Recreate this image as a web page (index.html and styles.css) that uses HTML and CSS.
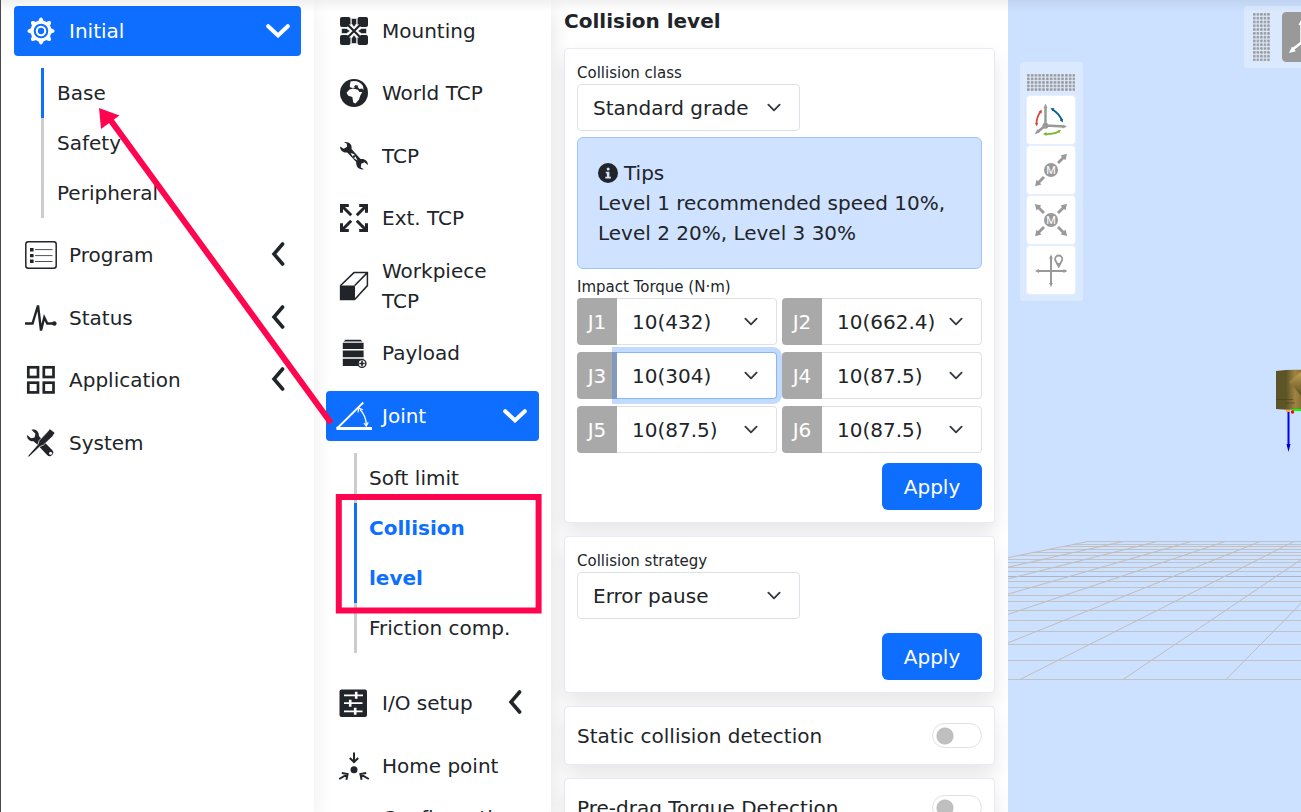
FILE: index.html
```html
<!DOCTYPE html>
<html lang="en">
<head>
<meta charset="utf-8">
<title>Collision level</title>
<link rel="stylesheet" href="styles.css">
</head>
<body>
<svg class="defs" aria-hidden="true">
  <symbol id="chev-down" viewBox="0 0 24 14"><path d="M2.2 2.2 12 11.4 21.8 2.2" fill="none" stroke="currentColor" stroke-width="4" stroke-linecap="round"/></symbol>
  <symbol id="chev-left" viewBox="0 0 14 24"><path d="M11.6 2 3 12l8.600 10" fill="none" stroke="currentColor" stroke-width="3.6" stroke-linecap="round"/></symbol>
</svg>
<div class="app">
  <nav class="main-nav" aria-label="Main">
    <ul class="nav-list">
      <li>
        <button class="nav-item active" type="button">
          <svg class="icon" viewBox="0 0 32 32"><circle cx="16" cy="16" r="8.900" fill="none" stroke="currentColor" stroke-width="3.200"/><circle cx="16" cy="16" r="4.200" fill="none" stroke="currentColor" stroke-width="2.100"/><g fill="currentColor"><path id="tooth" d="M12.500 7.500 14.500 3.400a1.700 1.700 0 0 1 3 0l2 4.100z"/><use href="#tooth" transform="rotate(45 16 16)"/><use href="#tooth" transform="rotate(90 16 16)"/><use href="#tooth" transform="rotate(135 16 16)"/><use href="#tooth" transform="rotate(180 16 16)"/><use href="#tooth" transform="rotate(225 16 16)"/><use href="#tooth" transform="rotate(270 16 16)"/><use href="#tooth" transform="rotate(315 16 16)"/></g></svg>
          <span>Initial</span><svg class="chev down"><use href="#chev-down"/></svg>
        </button>
        <ul class="sub-nav">
          <li><a class="current" href="#base">Base</a></li>
          <li><a href="#safety">Safety</a></li>
          <li><a href="#peripheral">Peripheral</a></li>
        </ul>
      </li>
      <li><button class="nav-item" type="button">
        <svg class="icon" viewBox="0 0 32 32"><rect x=".8" y="2.800" width="30.400" height="26.400" rx="2.500" fill="none" stroke="currentColor" stroke-width="1.500"/><path d="M5 9h3.600v3.500H5zM5 15h3.600v3.200H5zM5 20.500h3.600V24H5z" fill="currentColor"/><path d="M10 10.600h17.500M10 16.600h17.500M10 22.500h17.500" stroke="currentColor" stroke-width=".8"/></svg>
        <span>Program</span><svg class="chev left"><use href="#chev-left"/></svg></button></li>
      <li><button class="nav-item" type="button">
        <svg class="icon" viewBox="0 0 32 32"><path d="M0 21.500h7.500L13 3.500 16 28.500 19.300 15.500 22.300 21.500H29" fill="none" stroke="currentColor" stroke-width="2.400"/><circle cx="29.300" cy="21.500" r="2.300" fill="currentColor"/></svg>
        <span>Status</span><svg class="chev left"><use href="#chev-left"/></svg></button></li>
      <li><button class="nav-item" type="button">
        <svg class="icon" viewBox="0 0 32 32"><g fill="none" stroke="currentColor" stroke-width="2.700"><rect x="3.300" y="3.300" width="9.700" height="9.700"/><rect x="18.800" y="3.300" width="9.700" height="9.700"/><rect x="3.300" y="18.700" width="9.700" height="9.700"/><rect x="18.800" y="18.700" width="9.700" height="9.700"/></g></svg>
        <span>Application</span><svg class="chev left"><use href="#chev-left"/></svg></button></li>
      <li><button class="nav-item" type="button">
        <svg class="icon" viewBox="0 0 32 32" fill="currentColor"><path d="M6.500 2.800c4-1.200 7.600 1.600 7.400 6.200l4.200 4.700 9 9.300a3.400 3.400 0 1 1-5 5L12.700 18l-4.200-3.800C5 14.800 1.800 12.200 2 8l4 3.200 3.600-.8.8-3.600z"/><path d="M24.800 1.800 30 5.800 27.500 9.500 18.500 18 15 19.500 4 30 2.600 29.200 13 17.200l1.200-3.700 8.300-8.700z" stroke="#fff" stroke-width=".7"/><circle cx="25.600" cy="26.200" r="1.500" fill="#fff"/></svg>
        <span>System</span></button></li>
    </ul>
  </nav>

  <nav class="page-nav" aria-label="Initial base">
    <ul class="nav-list">
      <li><button class="nav-item" type="button">
        <svg class="icon" viewBox="0 0 36 36"><g fill="currentColor"><rect x="4" y="4" width="10.500" height="10" rx="2"/><rect x="21.500" y="4" width="10.500" height="10" rx="2"/><rect x="4" y="22" width="10.500" height="10" rx="2"/><rect x="21.500" y="22" width="10.500" height="10" rx="2"/></g><path d="m12.500 12.500 11 11M23.500 12.500l-11 11" stroke="#fff" stroke-width="4"/><path d="m11 11 14 14M25 11 11 25" stroke="currentColor" stroke-width="2.200"/><g fill="currentColor" stroke="#fff" stroke-width=".6"><path id="mt" d="M15.400 5.500h5.200v5L18 14.200l-2.600-3.700z"/><use href="#mt" transform="rotate(90 18 18)"/><use href="#mt" transform="rotate(180 18 18)"/><use href="#mt" transform="rotate(270 18 18)"/></g></svg>
        <span>Mounting</span></button></li>
      <li><button class="nav-item" type="button">
        <svg class="icon" viewBox="0 0 36 36"><circle cx="18" cy="18" r="14" fill="currentColor"/><path fill="#fff" d="M14.500 6.500c5-1.500 10 .3 12.500 4.500l.5 4-1.500-1.500-2.500.5-1.800-2 .5-1.200-2.700-.8-1.500 1.500 1.300.8-2.300.7-2.500-.6-.8-1.200zM13.500 14.500l3.500-1 5 1.200 1.300 2.300h3l-2 3.500-1.300 4-3.500 4-2.200-1-1-5.500-4-1.200-1.800-3z"/></svg>
        <span>World TCP</span></button></li>
      <li><button class="nav-item" type="button">
        <svg class="icon" viewBox="0 0 36 36"><path fill="currentColor" d="M8 4c5-.8 8.500 2.500 7.500 7l9 10c4.200-.7 7.500 2 7.500 6l-3.600-2.800-3.200 1.500-.4 3.800 3.200 1.800c-4.800.8-8.200-2-7.800-7.200L11.200 14.500C7.500 15 4 12.500 4 8.500l3.800 2.300 3.200-2-.2-3z"/><path d="m14.500 15 3.500 1 3.600 6.400-3.800-2.100z" fill="#fff"/><circle cx="18" cy="18.500" r="1.200" fill="currentColor"/></svg>
        <span>TCP</span></button></li>
      <li><button class="nav-item" type="button">
        <svg class="icon" viewBox="0 0 36 36"><g fill="none" stroke="currentColor" stroke-width="3"><path id="ex" d="M5.500 12.800V5.500h7.300M6 6l9.200 9.200"/><use href="#ex" transform="rotate(90 18 18)"/><use href="#ex" transform="rotate(180 18 18)"/><use href="#ex" transform="rotate(270 18 18)"/></g></svg>
        <span>Ext. TCP</span></button></li>
      <li><button class="nav-item" type="button">
        <svg class="icon" viewBox="0 0 36 36"><path d="M4.600 17.500 18 4.600h13.400v13L18.700 31.400H4.600zM18.700 17.500 31.400 4.600" fill="none" stroke="currentColor" stroke-width="1.500"/><path d="M4 17.500h15v14H4z" fill="currentColor"/></svg>
        <span>Workpiece TCP</span></button></li>
      <li><button class="nav-item" type="button">
        <svg class="icon" viewBox="0 0 36 36"><path fill="currentColor" d="M9.500 4.700h15l2 1.800h-19zM6.800 7.700h20.800v6.400H6.800zM6.800 15.600h20.800v6.600H6.800zM6.800 23.800h20.800V31H6.800z"/><circle cx="26" cy="28.500" r="3.900" fill="#fff" stroke="currentColor" stroke-width="1.400"/><path d="M26 25.800v5.400M23.300 28.500h5.400" stroke="currentColor" stroke-width="1.600"/></svg>
        <span>Payload</span></button></li>
      <li>
        <button class="nav-item active" type="button">
          <svg class="icon" viewBox="0 0 36 36" fill="none" stroke="currentColor"><path d="M.5 30.500h35.500" stroke-width="3"/><path d="M2 29.500 27.300 4.500" stroke-width="1.800"/><path d="M24 11.500c4 4 6.200 9.500 6.400 16" stroke-width="1.300"/><path d="m22 14.500.8-4.500 4 1.700M28 25l2.200 3.200 2-3.800" stroke-width="1.200"/><circle cx="2.400" cy="30" r="1.500" stroke-width="1"/></svg>
          <span>Joint</span><svg class="chev down"><use href="#chev-down"/></svg>
        </button>
        <ul class="sub-nav">
          <li><a href="#soft-limit">Soft limit</a></li>
          <li><a class="current selected" href="#collision-level">Collision level</a></li>
          <li><a href="#friction">Friction comp.</a></li>
        </ul>
      </li>
      <li><button class="nav-item" type="button">
        <svg class="icon" viewBox="0 0 36 36"><rect x="3.500" y="4.500" width="27.500" height="27.500" rx="2" fill="currentColor"/><path d="M8 10.300h19M8 18.200h18.500M8 26.300h18.500" stroke="#fff" stroke-width="1.800"/><path d="M20.200 6.800v7M14.200 14.700v7M19.200 22.800v7" stroke="#fff" stroke-width="2.600"/></svg>
        <span>I/O setup</span><svg class="chev left"><use href="#chev-left"/></svg></button></li>
      <li><button class="nav-item" type="button">
        <svg class="icon" viewBox="0 0 36 36"><circle cx="18" cy="21.700" r="3.500" fill="currentColor"/><g fill="none" stroke="currentColor" stroke-width="2"><path d="M18 4.500v9M13.800 10l4.200 4 4.200-4"/><path d="m3.200 31 8-4.700M5.800 25l5.800 1-1.200 5.800M32.800 31l-8-4.700M30.200 25l-5.800 1 1.200 5.800"/></g></svg>
        <span>Home point</span></button></li>
      <li><button class="nav-item top" type="button">
        <span class="icon"></span>
        <span>Configuration</span></button></li>
    </ul>
  </nav>

  <main class="settings">
    <h1 class="title">Collision level</h1>
    <section class="card">
      <label class="caption" for="grade">Collision class</label>
      <select class="select medium" id="grade"><option>Standard grade</option></select>
      <div class="tips">
        <p class="tips-head"><svg class="info" viewBox="0 0 20 20"><circle cx="10" cy="10" r="10" fill="currentColor"/><circle cx="10.200" cy="6" r="1.500" fill="#cfe2ff"/><path d="M7.800 8.800h3.600v5h1.500v1.600H7.300v-1.600h1.600v-3.400H7.800z" fill="#cfe2ff"/></svg>Tips</p>
        <p>Level 1 recommended speed 10%, Level 2 20%, Level 3 30%</p>
      </div>
      <p class="caption" id="torque">Impact Torque (N·m)</p>
      <div class="joints" role="group" aria-labelledby="torque">
        <div class="joint"><label for="j1">J1</label><select class="select" id="j1"><option>10(432)</option></select></div>
        <div class="joint"><label for="j2">J2</label><select class="select" id="j2"><option>10(662.4)</option></select></div>
        <div class="joint"><label for="j3">J3</label><select class="select focused" id="j3"><option>10(304)</option></select></div>
        <div class="joint"><label for="j4">J4</label><select class="select" id="j4"><option>10(87.5)</option></select></div>
        <div class="joint"><label for="j5">J5</label><select class="select" id="j5"><option>10(87.5)</option></select></div>
        <div class="joint"><label for="j6">J6</label><select class="select" id="j6"><option>10(87.5)</option></select></div>
      </div>
      <div class="actions"><button class="apply" type="button">Apply</button></div>
    </section>
    <section class="card">
      <label class="caption" for="strategy">Collision strategy</label>
      <select class="select medium" id="strategy"><option>Error pause</option></select>
      <div class="actions spaced"><button class="apply" type="button">Apply</button></div>
    </section>
    <section class="card switch-row">
      <label for="static">Static collision detection</label><input class="switch" type="checkbox" role="switch" id="static">
    </section>
    <section class="card switch-row">
      <label for="predrag">Pre-drag Torque Detection</label><input class="switch" type="checkbox" role="switch" id="predrag">
    </section>
  </main>

  <section class="scene" aria-label="Robot view">
    <svg class="world" aria-hidden="true">
      <defs>
        <linearGradient id="metal"><stop offset="0" stop-color="#5c5426"/><stop offset=".32" stop-color="#5e5527"/><stop offset=".6" stop-color="#a08442"/><stop offset="1" stop-color="#6b5a28"/></linearGradient>
        <linearGradient id="elbow" x2="0" y2="1"><stop offset="0" stop-color="#c9a455"/><stop offset="1" stop-color="#4c431c"/></linearGradient>
      </defs>
      <g stroke="#c2c1c4" stroke-width="1" fill="none" shape-rendering="crispEdges">
        <path d="M80 541.500H900M65 544.500H900M55 546.500H900M40 549.500H900M25 552.500H900M10 555.500H900M0 559.500H900M0 562.500H900M0 567.500H900M0 571.500H900M0 581.500H900M0 587.500H900M0 595.500H900M0 601.500H900M0 610.500H900M0 620.500H900M0 631.500H900M0 644.500H900M0 660.500H900M0 679.500H900"/>
        <path d="M0 576.500H900" stroke="#a9b4c6"/>
      </g>
      <path d="M80 541.500-606 679.500M115 541.500-503 679.500M149 541.500-400 679.500M183 541.500-297 679.500M217 541.500-194 679.500M252 541.500-91 679.500M286 541.500 12 679.500M320 541.500 115 679.500M354 541.500 218 679.500M388 541.500 321 679.500M423 541.500 424 679.500M457 541.500 527 679.500M491 541.500 630 679.500M525 541.500 733 679.500" stroke="#c2bdbb" stroke-width="1" fill="none"/>
      <path d="M268 371q14-2 32-1v38q-14 3-32 1z" fill="url(#metal)"/>
      <path d="M281 382 294 371h10v28h-8z" fill="url(#elbow)"/>
      <path d="M268 399.500h17M277 403h10" stroke="#484019" stroke-width="1" opacity=".6"/>
      <path d="M284 410h20" stroke="#0f0" stroke-width="2"/>
      <path d="M278 411h4" stroke="#ffa51f" stroke-width="2"/>
      <circle cx="284.500" cy="412" r="1.700" fill="red"/>
      <path d="M280.500 412v35" stroke="#00f" stroke-width="2"/><path d="M278.500 444h4l-2 8z" fill="#0000d8"/>
    </svg>
    <div class="tools-side">
      <svg class="grip" viewBox="0 0 48 17"><defs><pattern id="dots" width="3.800" height="3.550" patternUnits="userSpaceOnUse"><rect width="2.700" height="2.600" rx=".9" fill="#999"/></pattern></defs><rect width="48.500" height="17" fill="url(#dots)"/></svg>
      <button class="tool" type="button" aria-label="Rotate axes"><svg viewBox="0 0 34 34"><g fill="#999" stroke="#999"><path d="M11.500 22.500V4.500M11.500 22.500l19 1M11.500 22.500l-8 6.500" stroke-width="2.500"/><path d="m11.500 1 1.600 4h-3.200zM32.500 23.500l-4 1.500.2-3zM1 31l2.500-4.500 2 2.700z" stroke-width=".5"/><circle cx="11.500" cy="22.700" r="2.600"/></g><path d="M2.500 21.500Q2.300 14 7 8" fill="none" stroke="#d9463c" stroke-width="1.800"/><path d="M1.200 20h3l-1.500 3.500zM4.500 9 7.500 6.500l.2 4z" fill="#d9463c"/><path d="M18.500 6.500q6.500 4 9.500 11" fill="none" stroke="#0b5f90" stroke-width="2"/><path d="m16.500 5 4 .2-2 3zM28.800 19.500l-3-2.200 3-1.500z" fill="#0b5f90"/><path d="M11 31q8.500.5 14-2.500" fill="none" stroke="#7cb82c" stroke-width="1.800"/><path d="m9 31 3.500-2v4zM27 27l-3.500.2 1.700 3z" fill="#7cb82c"/></svg></button>
      <button class="tool" type="button" aria-label="Move"><svg viewBox="0 0 34 34"><g fill="#999"><path id="ray" d="m23 9 5-5-1.500-1.500L33 .8l-1.500 6.500L30 6l-5 5z"/><use href="#ray" transform="rotate(180 17 17)"/><circle cx="17" cy="17" r="7"/></g><text class="m" x="17" y="21">M</text></svg></button>
      <button class="tool" type="button" aria-label="Move all"><svg viewBox="0 0 34 34"><g fill="#999"><use href="#ray"/><use href="#ray" transform="rotate(90 17 17)"/><use href="#ray" transform="rotate(180 17 17)"/><use href="#ray" transform="rotate(270 17 17)"/><circle cx="17" cy="17" r="7"/></g><text class="m" x="17" y="21">M</text></svg></button>
      <button class="tool" type="button" aria-label="Point position"><svg viewBox="0 0 34 34"><path d="M17 3v29M3 18h29" stroke="#999" stroke-width="2"/><path fill="#999" d="m17 1.500 1.900 4h-3.800zM17 34l1.900-4h-3.800zM1 18l4-1.900v3.800zM33.500 18l-4-1.900v3.800z"/><path d="M24.700 2.500a3.600 3.600 0 0 1 3.400 4.800l-3.400 6-3.400-6a3.600 3.600 0 0 1 3.400-4.800z" fill="#fff" stroke="#999" stroke-width="1.800"/><path d="m22 10 2.700 5 2.700-5z" fill="#999"/></svg></button>
    </div>
    <div class="tools-top">
      <svg class="grip-tall" viewBox="0 0 17 48"><defs><pattern id="dots-tall" width="3.550" height="3.800" patternUnits="userSpaceOnUse"><rect width="2.600" height="2.700" rx=".9" fill="#999"/></pattern></defs><rect width="17" height="48.500" fill="url(#dots-tall)"/></svg>
      <button class="tool pressed" type="button" aria-label="Axes"><svg viewBox="0 0 34 34"><path d="M11.500 22.500V3M11.500 22.500l19 1M11.500 22.500l-9 7" stroke="#fff" stroke-width="2.500"/><path d="m11.500-1 3 6h-6zM34 23.600l-6 2.700.3-5.600zM-1 33l3-6.500 3.800 4.700z" fill="#fff"/></svg></button>
    </div>
  </section>

  <svg class="callout" aria-hidden="true"><path d="M331 423 109 118" stroke="#ff0550" stroke-width="6"/><path d="M99 108 119.500 115.500 101 129z" fill="#ff0550"/><rect x="338.800" y="497" width="199.800" height="113.500" fill="none" stroke="#ff0550" stroke-width="6"/></svg>
</div>
</body>
</html>
```
FILE: styles.css
```css
* { box-sizing: border-box; }

body {
  margin: 0;
  font: 20px/30px "DejaVu Sans", sans-serif;
  color: #212529;
}

button, select, input { font: inherit; color: inherit; margin: 0; }
ul { list-style: none; margin: 0; padding: 0; }
p { margin: 0; }
a { color: inherit; text-decoration: none; }

.defs { position: absolute; width: 0; height: 0; }

.app {
  position: relative;
  display: flex;
  height: 100vh;
  overflow: hidden;
  border-left: 1px solid #4a4a4a;
  background: #fff;
}

.app::before {
  content: "";
  position: absolute;
  inset: 0 0 auto;
  height: 12px;
  z-index: 5;
  background: linear-gradient(rgba(0, 0, 0, .06), transparent);
  pointer-events: none;
}

/* navigation columns */
.main-nav, .page-nav {
  flex: none;
  background: #fff;
}
.main-nav {
  width: 313px;
  padding: 6px 13px;
  z-index: 2;
  box-shadow: 0 10px 20px rgba(0, 0, 0, .08);
}
.page-nav {
  width: 237px;
  padding: 6px 12px;
  z-index: 1;
  box-shadow: 0 10px 20px rgba(0, 0, 0, .12);
}

.nav-list > li + li { margin-top: 13px; }
.nav-list > li:nth-child(even) { margin-top: 12px; }

.nav-item {
  display: flex;
  align-items: center;
  width: 100%;
  min-height: 50px;
  padding: 0 12px 0 10px;
  gap: 10px;
  border: 0;
  border-radius: 4px;
  background: none;
  text-align: left;
}
.main-nav .nav-item { padding: 0 11px; gap: 12px; }
.nav-item.active { background: #0d6eff; color: #fff; }
.nav-item.top { align-items: flex-start; }
.icon { flex: none; width: 36px; height: 36px; }
.main-nav .icon { width: 32px; height: 32px; }

.chev { flex: none; margin-left: auto; }
.chev.down { width: 24px; height: 14px; }
.chev.left { width: 14px; height: 24px; margin-right: 5px; margin-bottom: 3px; }

.sub-nav { margin: 12px 0 0 27px; }
.page-nav .sub-nav { margin: 12px 0 25px 28px; }
.sub-nav a {
  display: block;
  padding-left: 13px;
  border-left: 3px solid #ccc;
  line-height: 50px;
}
.page-nav .sub-nav a { padding-left: 12px; }
.sub-nav a.current { border-color: #0d6eff; }
.page-nav .sub-nav a.selected { padding-right: 40px; color: #0d6eff; font-weight: bold; }

/* settings column */
.settings {
  flex: none;
  width: 457px;
  padding: 6px 13px;
  background: #fff;
}
.title { margin: 0 0 12px; font-size: 20px; line-height: 30px; }

.card {
  margin-bottom: 13px;
  padding: 12px;
  border: 1px solid #e8eaf8;
  border-radius: 4px;
  background: #fff;
  box-shadow: 0 10px 20px rgba(0, 0, 0, .1);
}

.caption { display: block; padding-top: 2px; font-size: 15px; line-height: 21px; }

.select {
  display: block;
  width: 100%;
  height: 47px;
  padding: 0 40px 0 15px;
  border: 1px solid #dee2e6;
  border-radius: 4px;
  appearance: none;
  outline: 0;
  background: #fff url("data:image/svg+xml,%3Csvg xmlns='http://www.w3.org/2000/svg' viewBox='0 0 16 16'%3E%3Cpath fill='none' stroke='%23343a40' stroke-linecap='round' stroke-linejoin='round' stroke-width='2' d='m2 5 6 6 6-6'/%3E%3C/svg%3E") no-repeat right 15px center / 20px 15px;
}
.select.medium { width: 55%; }

.tips {
  margin: 6px 0;
  padding: 20px;
  border: 1px solid #9ec5fe;
  border-radius: 6px;
  background: #cfe2ff;
}
.tips-head { display: flex; align-items: center; gap: 6px; }
.info { width: 20px; height: 20px; }

.joints {
  display: grid;
  grid-template-columns: 1fr 1fr;
  gap: 7px 5px;
}
.joint { display: flex; }
.joint label {
  flex: none;
  width: 40px;
  line-height: 48px;
  height: 47px;
  text-align: center;
  border-radius: 4px 0 0 4px;
  background: #a9a9a9;
  color: #fff;
}
.joint .select { flex: 1; min-width: 0; border-left: 0; border-radius: 0 4px 4px 0; padding-right: 36px; }
.joint .select.focused {
  border-color: #86b7fe;
  box-shadow: 0 0 0 5px rgba(13, 110, 253, .25);
}

.actions { display: flex; justify-content: flex-end; margin-top: 10px; }
.actions.spaced { margin-top: 14px; }
.apply {
  width: 100px;
  height: 47px;
  padding: 0;
  border: 0;
  border-radius: 6px;
  background: #0d6eff;
  color: #fff;
}

.switch-row {
  display: flex;
  align-items: center;
  justify-content: space-between;
  min-height: 59px;
}
.switch {
  appearance: none;
  width: 50px;
  height: 25px;
  border: 1px solid #dee2e6;
  border-radius: 13px;
  background: radial-gradient(circle at 12px 12px, #bfbfbf 8px, #fff 9px);
}

/* 3D view */
.scene {
  position: relative;
  z-index: 1;
  flex: 1;
  min-width: 0;
  overflow: hidden;
  background: #cce0ff;
}
.world { position: absolute; inset: 0; width: 100%; height: 100%; }

.tools-side, .tools-top {
  position: absolute;
  display: flex;
  background: rgba(255, 255, 255, .3);
  border-radius: 3px;
}
.tools-side {
  flex-direction: column;
  align-items: center;
  top: 62px;
  left: 12px;
  padding: 12px 7px 6px 6px;
}
.tools-top { top: 6px; left: 236px; padding: 6px 9px; gap: 12px; align-items: center; }
.grip { width: 48px; height: 17px; margin-bottom: 4px; }
.grip-tall { width: 17px; height: 48px; flex: none; }
.tool {
  flex: none;
  display: grid;
  place-items: center;
  width: 50px;
  height: 50px;
  padding: 0;
  border: 1px solid #e6efff;
  border-radius: 4px;
  background: #fff;
}
.tool svg { width: 34px; height: 34px; overflow: visible; }
.tool.pressed { background: #999; border-color: #999; }
.m { font: 11px Roboto, sans-serif; fill: #fff; text-anchor: middle; }

/* annotation drawn over the page */
.callout {
  position: absolute;
  top: 0;
  left: -1px;
  width: 100%;
  height: 100%;
  z-index: 6;
  pointer-events: none;
}
```
